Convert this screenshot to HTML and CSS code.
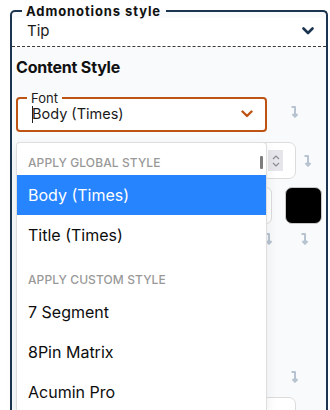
FILE: index.html
```html
<!DOCTYPE html>
<html>
<head>
<meta charset="utf-8">
<link rel="stylesheet" href="styles.css">
</head>
<body>
<fieldset class="panel">
  <legend class="panel-legend">Admonotions style</legend>
  <div class="panel-head">
    <span class="head-value">Tip</span>
    <svg class="chev" width="12" height="8" viewBox="0 0 12 8"><path d="M1.5 1.5 L6 6 L10.5 1.5" fill="none" stroke="#1b3550" stroke-width="2.6" stroke-linecap="round" stroke-linejoin="round"/></svg>
  </div>
  <div class="panel-body">
    <div class="section-title">Content Style</div>
    <div class="row-font">
      <fieldset class="font-field">
        <legend class="font-legend">Font</legend>
        <div class="font-value">
          <span class="caret"></span><span>Body (Times)</span>
          <svg class="chev-o" width="12" height="8" viewBox="0 0 12 8"><path d="M1.5 1.5 L6 6 L10.5 1.5" fill="none" stroke="#bd5414" stroke-width="2.4" stroke-linecap="round" stroke-linejoin="round"/></svg>
        </div>
      </fieldset>
      <div class="arrow-cell a1"><svg class="arr" width="10" height="14" viewBox="0 0 10 14"><path d="M1.5 2 H5 V11.5 M2.5 9 L5 11.8 L7.5 9" fill="none" stroke="#b7c3d1" stroke-width="2" stroke-linejoin="round"/></svg></div>
    </div>
    <div class="row-num">
      <div class="num-input"><span class="spin"><svg width="10" height="18" viewBox="0 0 10 18"><path d="M2 7 L5 4 L8 7 M2 11 L5 14 L8 11" fill="none" stroke="#8a8a92" stroke-width="1.2"/></svg></span></div>
      <div class="arrow-cell a2"><svg class="arr" width="10" height="14" viewBox="0 0 10 14"><path d="M1.5 2 H5 V11.5 M2.5 9 L5 11.8 L7.5 9" fill="none" stroke="#b7c3d1" stroke-width="2" stroke-linejoin="round"/></svg></div>
    </div>
    <div class="row-color">
      <div class="col-input"></div>
      <div class="swatch"></div>
    </div>
    <div class="row-arrows">
      <div class="arrow-cell a3"><svg class="arr" width="10" height="14" viewBox="0 0 10 14"><path d="M1.5 2 H5 V11.5 M2.5 9 L5 11.8 L7.5 9" fill="none" stroke="#b7c3d1" stroke-width="2" stroke-linejoin="round"/></svg></div>
      <div class="arrow-cell a4"><svg class="arr" width="10" height="14" viewBox="0 0 10 14"><path d="M1.5 2 H5 V11.5 M2.5 9 L5 11.8 L7.5 9" fill="none" stroke="#b7c3d1" stroke-width="2" stroke-linejoin="round"/></svg></div>
    </div>
    <div class="row-low">
      <div class="arrow-cell a1"><svg class="arr" width="10" height="14" viewBox="0 0 10 14"><path d="M1.5 2 H5 V11.5 M2.5 9 L5 11.8 L7.5 9" fill="none" stroke="#b7c3d1" stroke-width="2" stroke-linejoin="round"/></svg></div>
    </div>
    <div class="row-last">
      <div class="last-input"></div>
    </div>
  </div>
</fieldset>

<div class="menu">
  <div class="scroll-thumb"></div>
  <div class="group-head first">Apply global style</div>
  <div class="opt selected">Body (Times)</div>
  <div class="opt">Title (Times)</div>
  <div class="group-head second">Apply custom style</div>
  <div class="opt">7 Segment</div>
  <div class="opt">8Pin Matrix</div>
  <div class="opt">Acumin Pro</div>
</div>
</body>
</html>
```

FILE: styles.css
```css
html, body {
  margin: 0;
  padding: 0;
  background: #ffffff;
  font-family: Inter, "Liberation Sans", sans-serif;
  color: #111;
  overflow: hidden;
  height: 410px;
}
body {
  padding-top: 4px;
  box-sizing: border-box;
  position: relative;
}
.panel {
  margin: 0 0 0 10px;
  width: 318px;
  box-sizing: border-box;
  border: 2px solid #1b3550;
  border-bottom: none;
  border-radius: 5px 5px 0 0;
  padding: 0;
  background: #f9fafb;
  height: 406px;
  overflow: hidden;
}
.panel-legend {
  margin-left: 10px;
  padding: 0 5px 0 4px;
  font-size: 13px;
  font-weight: 700;
  letter-spacing: 0.9px;
  line-height: 14px;
  color: #111;
}
.panel-head {
  display: flex;
  align-items: center;
  justify-content: space-between;
  background: #ffffff;
  padding: 4px 12px 5px 15px;
  border-bottom: 1px dashed #3a3a3a;
  margin-top: -1px;
}
.head-value {
  font-size: 15px;
  line-height: 20px;
  color: #1a1a1a;
}
.chev { display: block; }
.panel-body {
  padding: 10px 0 0 4px;
}
.section-title {
  font-size: 16px;
  font-weight: 700;
  line-height: 20px;
  letter-spacing: -0.2px;
  color: #111;
}
.row-font {
  display: flex;
  align-items: center;
  margin-top: 14px;
}
.font-field {
  margin: 0;
  width: 251px;
  height: 41px;
  box-sizing: border-box;
  border: 2px solid #bd5414;
  border-radius: 4px;
  padding: 0 12px 0 9px;
  background: #ffffff;
}
.font-legend {
  padding: 0 4px;
  font-size: 13px;
  line-height: 14px;
  color: #1a1a1a;
}
.font-value {
  display: flex;
  align-items: center;
  font-size: 14.5px;
  line-height: 20px;
  color: #1a1a1a;
  padding-left: 5px;
  margin-top: -1px;
}
.caret {
  display: inline-block;
  width: 1px;
  height: 17px;
  background: #222;
  margin-right: -1px;
}
.chev-o {
  margin-left: auto;
  display: block;
}
.arrow-cell {
  display: flex;
  align-items: center;
  justify-content: center;
}
.arr { display: block; }
.a1 { width: 56px; }
.row-num {
  display: flex;
  justify-content: flex-end;
  align-items: center;
  margin-top: 10px;
  padding-right: 6px;
}
.num-input {
  width: 146px;
  height: 37px;
  box-sizing: border-box;
  border: 1px solid #dcdcdc;
  border-radius: 7px;
  background: #fff;
  display: flex;
  align-items: center;
  justify-content: flex-end;
  padding-right: 12px;
}
.spin {
  display: flex;
  align-items: center;
  justify-content: center;
  width: 15px;
  height: 21px;
  background: #e6e6ea;
}
.a2 { width: 24px; }
.row-color {
  display: flex;
  justify-content: flex-end;
  align-items: center;
  margin-top: 8px;
  padding-right: 4px;
  gap: 13px;
}
.col-input {
  width: 100px;
  height: 37px;
  box-sizing: border-box;
  border: 1px solid #dcdcdc;
  border-radius: 6px;
  background: #fff;
}
.swatch {
  width: 37px;
  height: 37px;
  box-sizing: border-box;
  border: 1px solid #c8c8c8;
  border-radius: 7px;
  background: #000;
}
.row-arrows {
  display: flex;
  justify-content: flex-end;
  margin-top: 8px;
  padding-right: 14px;
  gap: 22px;
}
.a3, .a4 { width: 14px; }
.row-low {
  display: flex;
  justify-content: flex-end;
  margin-top: 124px;
  padding-right: 3px;
}
.row-last {
  display: flex;
  justify-content: flex-end;
  margin-top: 13px;
  padding-right: 30px;
}
.last-input {
  width: 146px;
  height: 37px;
  box-sizing: border-box;
  border: 1px solid #dcdcdc;
  border-radius: 7px;
  background: #fff;
}
.menu {
  position: absolute;
  left: 16px;
  top: 142px;
  width: 251px;
  height: 268px;
  box-sizing: border-box;
  background: #ffffff;
  border: 1px solid #dedede;
  border-bottom: none;
  border-radius: 4px 4px 0 0;
  box-shadow: 0 4px 11px rgba(0, 0, 0, 0.08);
  overflow: hidden;
}
.scroll-thumb {
  position: absolute;
  right: 3px;
  top: 13px;
  width: 3px;
  height: 13px;
  border-radius: 1px;
  background: #7d7d7d;
}
.group-head {
  font-size: 12px;
  font-weight: 500;
  line-height: 14px;
  text-transform: uppercase;
  color: #999999;
  padding-left: 11px;
  letter-spacing: 0.1px;
}
.group-head.first { padding-top: 13px; padding-bottom: 5px; }
.group-head.second { padding-top: 18px; padding-bottom: 5px; }
.opt {
  height: 40px;
  line-height: 40px;
  font-size: 16px;
  padding-left: 11px;
  color: #0d0d0d;
}
.opt.selected {
  background: #2684ff;
  color: #ffffff;
}
```
